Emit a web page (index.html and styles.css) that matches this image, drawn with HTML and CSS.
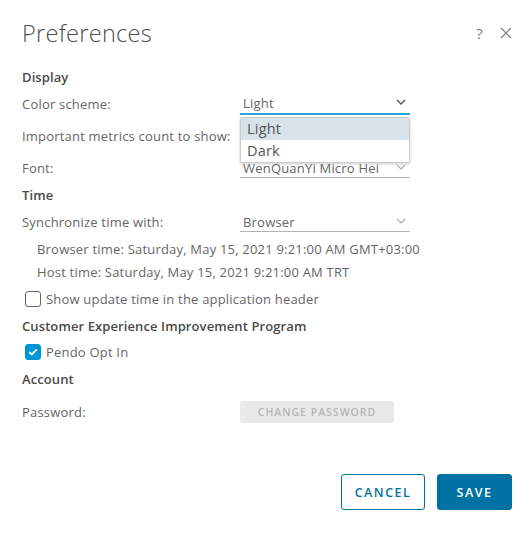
FILE: index.html
```html
<!DOCTYPE html>
<html lang="en">
<head>
    <meta charset="UTF-8">
    <meta name="viewport" content="width=device-width, initial-scale=1.0">
    <title>Preferences</title>
    <link rel="stylesheet" href="styles.css">
</head>
<body>
    <div class="modal">
        <div class="modal-header">
            <h1 class="modal-title">Preferences</h1>
            <div class="header-actions">
                <span class="help">?</span>
                <svg class="close" width="12" height="12" viewBox="0 0 12 12">
                    <path d="M1 1 L11 11 M11 1 L1 11" stroke="#7a7a7a" stroke-width="1.2" fill="none"/>
                </svg>
            </div>
        </div>

        <div class="modal-body">
            <h2 class="section-title">Display</h2>

            <div class="row">
                <span class="label">Color scheme:</span>
                <div class="select active">
                    <span>Light</span>
                    <svg class="chevron" width="10" height="6" viewBox="0 0 10 6">
                        <path d="M1 1 L5 5 L9 1" stroke="#555" stroke-width="1.3" fill="none"/>
                    </svg>
                    <ul class="dropdown">
                        <li class="selected">Light</li>
                        <li>Dark</li>
                    </ul>
                </div>
            </div>

            <div class="row">
                <span class="label">Important metrics count to show:</span>
            </div>

            <div class="row">
                <span class="label">Font:</span>
                <div class="select">
                    <span>WenQuanYi Micro Hei</span>
                    <svg class="chevron" width="10" height="6" viewBox="0 0 10 6">
                        <path d="M1 1 L5 5 L9 1" stroke="#aaa" stroke-width="1.1" fill="none"/>
                    </svg>
                </div>
            </div>

            <h2 class="section-title">Time</h2>

            <div class="row">
                <span class="label">Synchronize time with:</span>
                <div class="select">
                    <span>Browser</span>
                    <svg class="chevron" width="10" height="6" viewBox="0 0 10 6">
                        <path d="M1 1 L5 5 L9 1" stroke="#aaa" stroke-width="1.1" fill="none"/>
                    </svg>
                </div>
            </div>

            <p class="info first">Browser time: Saturday, May 15, 2021 9:21:00 AM GMT+03:00</p>
            <p class="info">Host time: Saturday, May 15, 2021 9:21:00 AM TRT</p>

            <label class="check">
                <span class="box"></span>
                Show update time in the application header
            </label>

            <h2 class="section-title">Customer Experience Improvement Program</h2>

            <label class="check pendo">
                <span class="box checked">
                    <svg width="10" height="8" viewBox="0 0 10 8">
                        <path d="M1.2 4 L3.8 6.4 L8.8 1.3" stroke="#fff" stroke-width="1.8" fill="none"/>
                    </svg>
                </span>
                Pendo Opt In
            </label>

            <h2 class="section-title">Account</h2>

            <div class="row password-row">
                <span class="label">Password:</span>
                <button class="btn-disabled">Change password</button>
            </div>
        </div>

        <div class="modal-footer">
            <button class="btn btn-outline">Cancel</button>
            <button class="btn btn-primary">Save</button>
        </div>
    </div>
</body>
</html>
```

FILE: styles.css
```css
* {
    box-sizing: border-box;
}
body {
    margin: 0;
    background: #fff;
    font-family: "Open Sans", "Noto Sans", sans-serif;
    color: #666;
    font-size: 13px;
    letter-spacing: 0.2px;
}
.modal {
    width: 529px;
    height: 533px;
    padding: 20px 17px 0 22px;
}
.modal-header {
    display: flex;
    justify-content: space-between;
    align-items: center;
    height: 26px;
}
.modal-title {
    margin: 0;
    font-size: 23.5px;
    font-weight: 300;
    color: #4d4d4d;
    line-height: 26px;
    letter-spacing: 0.3px;
}
.header-actions {
    display: flex;
    align-items: center;
    gap: 17px;
}
.help {
    font-size: 15px;
    color: #7a7a7a;
}
.modal-body {
    margin-top: 21px;
}
.section-title {
    margin: 0;
    font-size: 13px;
    font-weight: 600;
    color: #4a4a4a;
    line-height: 20px;
    height: 20px;
    letter-spacing: 0.1px;
}
.row {
    display: flex;
    align-items: center;
    height: 32px;
}
.label {
    width: 218px;
}
.select {
    position: relative;
    width: 170px;
    height: 20px;
    display: flex;
    align-items: center;
    justify-content: space-between;
    padding: 0 4px 0 3px;
    border-bottom: 1px solid #b3b3b3;
    color: #666;
}
.select.active {
    height: 21px;
    border-bottom: 2px solid #2aa5dc;
}
.chevron {
    margin-top: -2px;
}
.dropdown {
    position: absolute;
    top: 23px;
    left: 0;
    width: 170px;
    margin: 0;
    padding: 0;
    list-style: none;
    background: #fff;
    border: 1px solid #ccc;
    border-radius: 2px;
    box-shadow: 0 1px 3px rgba(0, 0, 0, 0.2);
    font-size: 14.5px;
    color: #555;
}
.dropdown li {
    height: 22px;
    line-height: 22px;
    padding-left: 6px;
}
.dropdown li.selected {
    background: #d8e3e9;
}
.section-title + .row {
    margin-top: 1px;
}
.row + .section-title {
    margin-top: 1px;
}
.info {
    margin: 0;
    padding-left: 15px;
    height: 23px;
    line-height: 23px;
}
.check {
    display: flex;
    align-items: center;
    gap: 5px;
    height: 28px;
    margin-top: 1px;
    padding-left: 3px;
}
.check + .section-title {
    margin-top: 3px;
}
.check.pendo {
    margin-top: 2px;
}
.box {
    width: 16px;
    height: 16px;
    border: 1px solid #666;
    border-radius: 3px;
    display: flex;
    align-items: center;
    justify-content: center;
}
.box.checked {
    background: #0095d3;
    border-color: #0095d3;
}
.row.password-row {
    margin-top: 7px;
}
.btn-disabled {
    width: 154px;
    height: 22px;
    border: none;
    border-radius: 3px;
    background: #e9e9e9;
    color: #b5b5b5;
    font-family: inherit;
    font-size: 10.5px;
    font-weight: 600;
    letter-spacing: 1px;
    text-transform: uppercase;
}
.modal-footer {
    display: flex;
    justify-content: flex-end;
    gap: 12px;
    margin-top: 46px;
}
.btn {
    height: 36px;
    border-radius: 3px;
    font-family: inherit;
    font-size: 12.5px;
    font-weight: 600;
    letter-spacing: 1.5px;
    text-transform: uppercase;
}
.btn-outline {
    width: 84px;
    background: #fff;
    border: 1px solid #0072a3;
    color: #0072a3;
}
.btn-primary {
    width: 75px;
    background: #0072a3;
    border: 1px solid #0072a3;
    color: #fff;
}
```
